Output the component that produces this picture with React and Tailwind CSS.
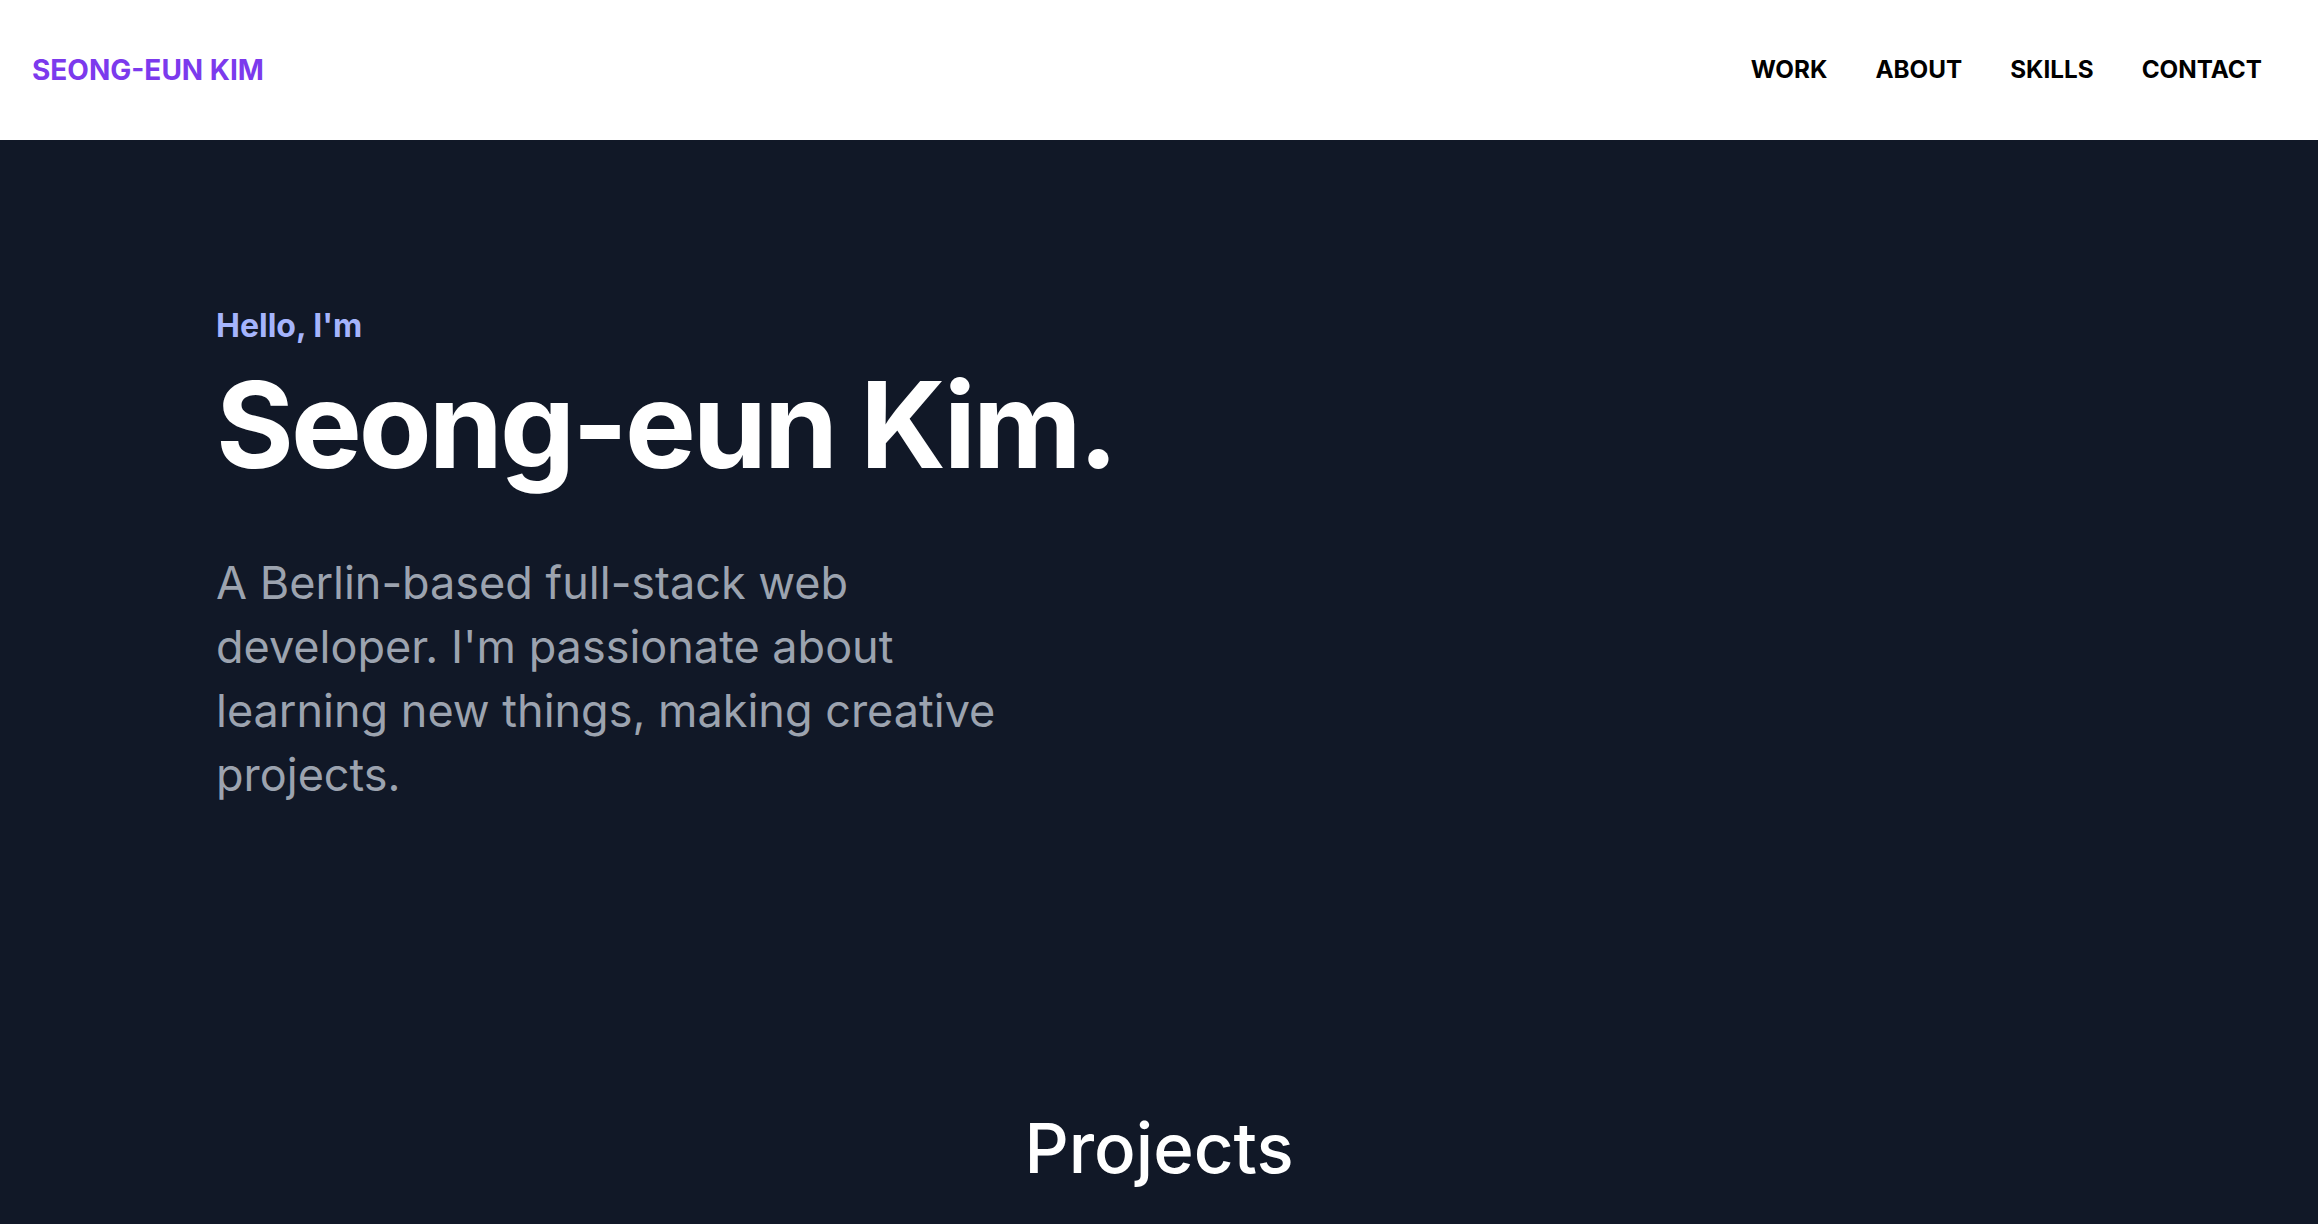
import React from "react";

const links = ["WORK", "ABOUT", "SKILLS", "CONTACT"];

export default function App() {
  return (
    <div className="min-h-screen bg-[#111827] font-['Inter',sans-serif]">
      {/* Header */}
      <header className="h-[140px] bg-white flex items-center justify-between px-8">
        <a href="#" className="text-[28px] font-bold text-[#7c3aed] leading-none">
          SEONG-EUN KIM
        </a>
        <nav className="flex items-center">
          {links.map((l) => (
            <a key={l} href="#" className="px-6 text-[24.25px] font-bold text-black leading-none">
              {l}
            </a>
          ))}
        </nav>
      </header>

      {/* Hero */}
      <section className="pl-[216px] pt-[166px]">
        <p className="text-[32px] leading-[40px] font-bold text-[#a5b4fc]">Hello, I'm</p>
        <h1 className="mt-5 text-[119px] leading-none font-bold text-white tracking-tight">
          Seong-eun Kim.
        </h1>
        <p className="mt-[66px] max-w-[800px] text-[45px] leading-[64px] text-[#9ca3af]">
          A Berlin-based full-stack web developer. I'm passionate about learning new things, making
          creative projects.
        </p>
      </section>

      {/* Projects */}
      <section className="mt-[307px] pb-16">
        <h2 className="text-center text-[69px] leading-none font-medium text-white">Projects</h2>
      </section>
    </div>
  );
}
